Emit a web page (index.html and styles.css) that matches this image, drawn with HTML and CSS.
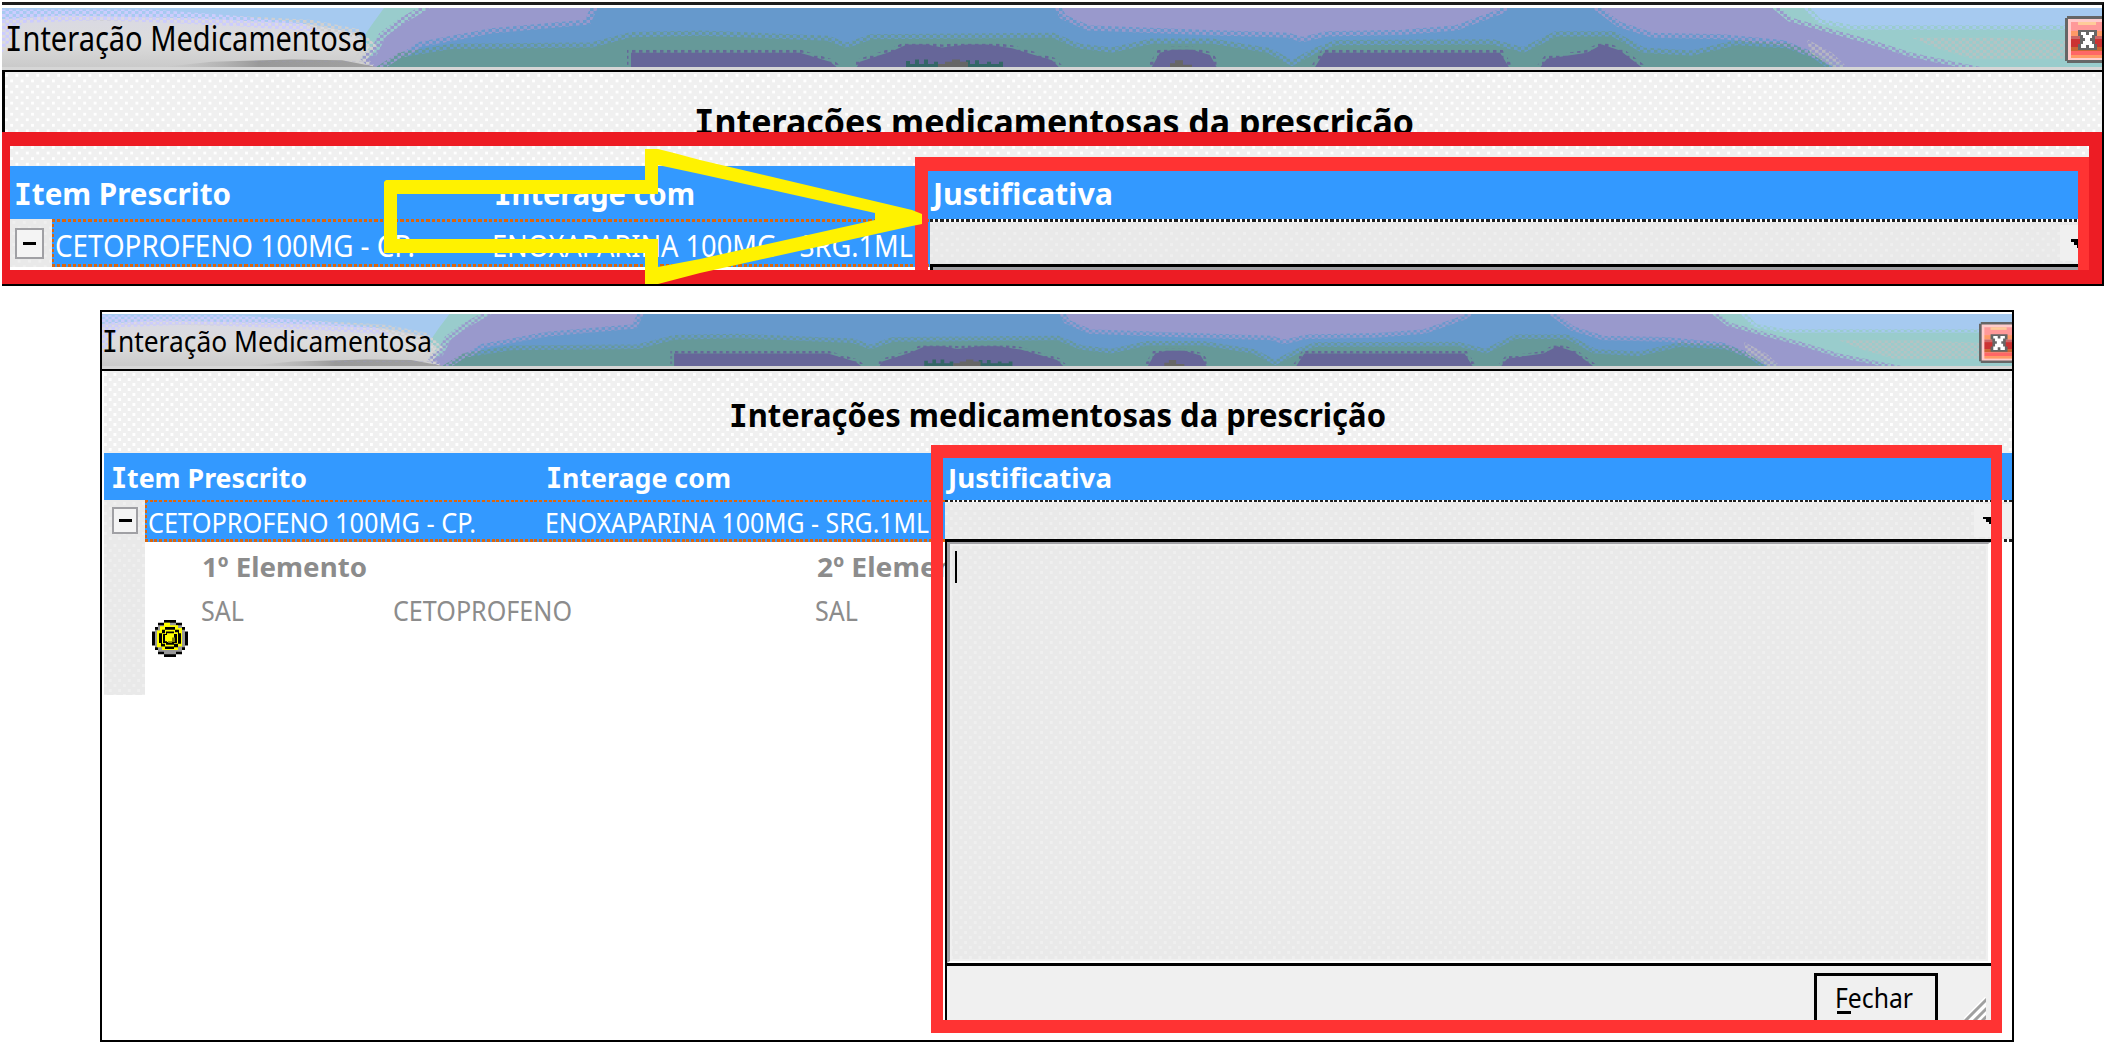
FILE: index.html
```html
<!DOCTYPE html>
<html lang="pt-BR">
<head>
<meta charset="utf-8">
<title>Interação Medicamentosa</title>
<link rel="stylesheet" href="styles.css">
</head>
<body>
<svg class="defs" width="0" height="0" aria-hidden="true">
  <defs>
    <pattern id="d-blue" width="7" height="8" patternUnits="userSpaceOnUse"><path fill="#6699cc" d="M0 0h3.5v4H0zM3.5 4H7v4H3.5z"/></pattern>
    <pattern id="d-teal" width="7" height="8" patternUnits="userSpaceOnUse"><path fill="#669999" d="M0 0h3.5v4H0zM3.5 4H7v4H3.5z"/></pattern>
    <pattern id="d-dark" width="7" height="8" patternUnits="userSpaceOnUse"><path fill="#666699" d="M0 0h3.5v4H0z"/></pattern>
    <pattern id="d-purple" width="7" height="8" patternUnits="userSpaceOnUse"><path fill="#9999cc" d="M0 0h3.5v4H0z"/></pattern>
    <pattern id="d-aqua" width="7" height="8" patternUnits="userSpaceOnUse"><path fill="#99cccc" d="M0 0h3.5v4H0zM3.5 4H7v4H3.5z"/></pattern>
    <pattern id="d-beige" width="7" height="8" patternUnits="userSpaceOnUse"><path fill="#c0c0c0" d="M0 0h3.5v4H0zM3.5 4H7v4H3.5z"/></pattern>
    <pattern id="d-lav" width="7" height="8" patternUnits="userSpaceOnUse"><path fill="#ccccff" d="M0 0h3.5v4H0zM3.5 4H7v4H3.5z"/></pattern>
    <pattern id="d-gray" width="7" height="8" patternUnits="userSpaceOnUse"><path fill="#d0d0d0" d="M0 0h3.5v4H0zM3.5 4H7v4H3.5z"/></pattern>
    <linearGradient id="glass" x2="0" y2="1"><stop offset="0" stop-color="#d9d9e4"/><stop offset=".45" stop-color="#dcdcdc"/><stop offset="1" stop-color="#c4c4c4"/></linearGradient>
    <linearGradient id="shade" x2="1" y2="0"><stop offset="0" stop-color="#b8b8b8" stop-opacity="0"/><stop offset=".45" stop-color="#999"/><stop offset="1" stop-color="#a0a0a0"/></linearGradient>
    <symbol id="aero" viewBox="0 0 2100 79" preserveAspectRatio="none">
      <rect width="2100" height="79" fill="#9999cc"/>
      <path stroke="url(#d-blue)" stroke-width="14" fill="#6699cc" d="M600 -12L588 22L490 34L420 52L376 90H1850L1810 66L1780 50L1720 42L1650 40L1615 25L1590 0V-12H1520L1500 8L1455 30L1400 36L1325 38L1300 46L1285 40L1200 36L1085 30L1058 14L1048 -12Z"/>
      <path stroke="url(#d-teal)" stroke-width="14" fill="#669999" d="M372 90L400 66L450 55L590 53L630 39L700 37L825 44L845 54L870 42L1050 40L1075 54L1110 60L1150 48L1210 48L1265 60L1290 78L1315 60L1335 50L1490 49L1522 60L1555 38L1610 38L1640 60L1690 64L1735 50L1785 54L1812 68L1835 90Z"/>
      <path stroke="url(#d-dark)" stroke-width="8" fill="#666699" d="M629 90V60H798L828 72L845 90ZM850 90L858 72L890 58L905 49L925 49L940 53L965 49L985 49L1010 54L1050 70L1065 90ZM1145 90L1158 60L1170 56H1190L1208 63L1219 90ZM1308 90L1322 60H1498L1512 90ZM1532 90L1545 68L1585 60L1600 49L1618 57L1650 90Z"/>
      <path fill="#336666" d="M904 79v-8h4v4h5v-6h4v6h5v-6h4v6h6v-3h4v7zM964 79v-9h4v5h5v-5h4v5h8v-3h4v3h8v-3h4v7z"/>
      <path fill="#666666" d="M936 79v-4h7v-3h7v-3h8v3h8v7zM1168 79v-5h5v-4h8v6h9v3z"/>
      <path stroke="url(#d-aqua)" stroke-width="12" fill="#99cccc" d="M1769 -10L1790 13L1835 30L1870 43L1910 60L1960 74L2020 90H2120V-10Z"/>
      <path stroke="url(#d-aqua)" stroke-width="12" fill="#a6caf0" d="M1795 -10L1815 20L1850 29H2120V-10Z"/>
      <path fill="url(#d-beige)" opacity=".75" d="M1910 40H2000L2100 46V68H1970L1935 54ZM1805 42L1830 60L1845 79H1830L1808 60Z"/>
      <path stroke="url(#d-aqua)" stroke-width="16" fill="#99cccc" d="M-10 -10H428L395 16L377 34L368 58L300 79H-10Z"/>
      <path fill="#a6caf0" d="M0 0H382L370 22L360 42H0Z"/>
      <path stroke="url(#d-gray)" stroke-width="12" fill="url(#glass)" d="M-10 16L60 10L200 14L310 22L355 34L368 52L358 68L375 90H-10Z"/>
      <path fill="url(#d-lav)" d="M0 2H150L230 10L300 20L320 32L230 24L100 16L20 20L0 60Z"/>
      <path fill="url(#shade)" d="M160 79L210 72L290 69L340 70L375 79Z"/>
      <path fill="url(#d-purple)" d="M250 69H370V60H380V72H250Z"/>
    </symbol>
    <symbol id="close" viewBox="0 0 37 47" preserveAspectRatio="none">
      <path fill="#666" d="M2 0H37V47H2V45H0V2H2Z"/>
      <path fill="#ffcccc" d="M3 3H37V44H3Z"/>
      <path fill="#ff9999" d="M6 6H37V15H6Z"/><path fill="#ffcc99" d="M13 6H31V9H13Z"/>
      <path fill="#ff9966" d="M6 15H37V20H6Z"/>
      <path fill="#cc6666" d="M6 20H37V23H6Z"/>
      <path fill="#cc3333" d="M6 23H37V31H6Z"/><path fill="#cc6633" d="M6 31H37V35H6Z"/>
      <path fill="#ff6666" d="M6 35H37V39H6Z"/><path fill="#ff9966" d="M6 39H37V42H6Z"/>
      <path fill="#666" d="M13 14H32V20H30V28H32V34H13V28H15V20H13Z"/>
      <path fill="#fff" d="M16 16H21V19H24V16H29V19H27V22H25V25H27V28H29V32H24V29H21V32H16V28H18V25H20V22H18V19H16Z"/>
    </symbol>
  </defs>
</svg>

<section class="window window--top">
  <header class="titlebar">
    <svg class="titlebar__glass"><use href="#aero" width="100%" height="100%"/></svg>
    <svg class="label label--dark" width="361" height="59"><text x="-2" y="42.5" font-size="34" textLength="363" lengthAdjust="spacingAndGlyphs"><tspan class="i">I</tspan>nteração Medicamentosa</text></svg>
    <svg class="titlebar__close"><use href="#close" width="100%" height="100%"/></svg>
  </header>
  <div class="heading dots">
    <svg class="label label--dark label--bold" width="718" height="94"><text x="-2" y="63" font-size="36" textLength="720" lengthAdjust="spacingAndGlyphs"><tspan class="i">I</tspan>nterações medicamentosas da prescrição</text></svg>
  </div>
  <div class="grid-head">
    <svg class="label label--bold" width="216" height="53"><text x="-1" y="39" font-size="31" textLength="217" lengthAdjust="spacingAndGlyphs"><tspan class="i">I</tspan>tem Prescrito</text></svg>
    <svg class="label label--bold" width="200" height="53"><text x="-1" y="39" font-size="31" textLength="201" lengthAdjust="spacingAndGlyphs"><tspan class="i">I</tspan>nterage com</text></svg>
    <svg class="label label--bold" width="180" height="53"><text x="0" y="39" font-size="31" textLength="180" lengthAdjust="spacingAndGlyphs">Justificativa</text></svg>
  </div>
  <div class="grid-row">
    <div class="tree dots dots--gray"><span class="toggle"></span></div>
    <div class="selected">
      <svg class="label" width="358" height="48"><text x="-2" y="37.5" font-size="31" textLength="360" lengthAdjust="spacingAndGlyphs">CETOPROFENO 100MG - CP.</text></svg>
      <svg class="label" width="419" height="48"><text x="-2" y="37.5" font-size="31" textLength="421" lengthAdjust="spacingAndGlyphs">ENOXAPARINA 100MG - SRG.1ML</text></svg>
    </div>
    <div class="combo dots dots--gray"><span class="combo__button"><svg width="17" height="9"><path d="M0 0H17V3H14V6H11V9H6V6H3V3H0Z"/></svg></span></div>
  </div>
  <div class="memo-edge"></div>
  <span class="mark mark--field"></span>
  <span class="mark mark--row"></span>
  <svg class="arrow" width="540" height="136"><path fill="#fff200" fill-rule="evenodd" d="M2 31H261V0H274L290 4L316 11L528 61L538 65V75L528 77L316 124L274 135H261V104H0V33ZM13 45V90H274V118L316 110L491 71V64L316 25L274 16V45Z"/></svg>
</section>

<section class="window window--main">
  <header class="titlebar">
    <svg class="titlebar__glass"><use href="#aero" width="100%" height="100%"/></svg>
    <svg class="label label--dark" width="328" height="52"><text x="-2" y="38" font-size="29.5" textLength="330" lengthAdjust="spacingAndGlyphs"><tspan class="i">I</tspan>nteração Medicamentosa</text></svg>
    <svg class="titlebar__close"><use href="#close" width="100%" height="100%"/></svg>
  </header>
  <div class="heading dots">
    <svg class="label label--dark label--bold" width="655" height="82"><text x="-2" y="55.5" font-size="32" textLength="657" lengthAdjust="spacingAndGlyphs"><tspan class="i">I</tspan>nterações medicamentosas da prescrição</text></svg>
  </div>
  <div class="grid-head">
    <svg class="label label--bold" width="195" height="47"><text x="-1" y="34.5" font-size="27.5" textLength="196" lengthAdjust="spacingAndGlyphs"><tspan class="i">I</tspan>tem Prescrito</text></svg>
    <svg class="label label--bold" width="184" height="47"><text x="-1" y="34.5" font-size="27.5" textLength="185" lengthAdjust="spacingAndGlyphs"><tspan class="i">I</tspan>nterage com</text></svg>
    <svg class="label label--bold" width="164" height="47"><text x="0" y="34.5" font-size="27.5" textLength="164" lengthAdjust="spacingAndGlyphs">Justificativa</text></svg>
  </div>
  <div class="grid-row">
    <div class="tree dots dots--gray"><span class="toggle"></span></div>
    <div class="selected">
      <svg class="label" width="326" height="42"><text x="-2" y="32.5" font-size="27" textLength="328" lengthAdjust="spacingAndGlyphs">CETOPROFENO 100MG - CP.</text></svg>
      <svg class="label" width="382" height="42"><text x="-2" y="32.5" font-size="27" textLength="384" lengthAdjust="spacingAndGlyphs">ENOXAPARINA 100MG - SRG.1ML</text></svg>
    </div>
    <div class="combo dots dots--gray"><span class="combo__button"><svg width="16" height="7"><path d="M0 0H16V2H13V5H10V7H6V5H3V2H0Z"/></svg></span></div>
  </div>
  <div class="content">
    <div class="tree dots dots--gray"></div>
    <div class="details">
      <div class="details__head">
        <svg class="label label--gray label--bold" width="164" height="35"><text x="-1" y="34.5" font-size="27.5" textLength="165" lengthAdjust="spacingAndGlyphs">1º Elemento</text></svg>
        <svg class="label label--gray label--bold" width="168" height="35"><text x="0" y="34.5" font-size="27.5" textLength="168" lengthAdjust="spacingAndGlyphs">2º Elemento</text></svg>
      </div>
      <div class="details__row">
        <svg class="label label--gray" width="43" height="43"><text x="0" y="44" font-size="27" textLength="43" lengthAdjust="spacingAndGlyphs">SAL</text></svg>
        <svg class="label label--gray" width="178" height="43"><text x="-1" y="44" font-size="27" textLength="179" lengthAdjust="spacingAndGlyphs">CETOPROFENO</text></svg>
        <svg class="label label--gray" width="43" height="43"><text x="0" y="44" font-size="27" textLength="43" lengthAdjust="spacingAndGlyphs">SAL</text></svg>
      </div>
      <svg class="severity" width="36" height="37" viewBox="0 0 36 42" preserveAspectRatio="none">
        <path fill="#000" d="M12 0H24V3H30V8H33V13H36V29H33V34H30V39H24V42H12V39H6V34H3V29H0V13H3V8H6V3H12Z"/>
        <path fill="#999" d="M12 3H24V6H30V11H33V31H30V36H24V39H12V36H6V31H3V11H6V6H12Z"/>
        <path fill="#ff0" d="M12 3H18V6H26V9H30V30H26V34H10V31H5V12H8V7H12Z"/>
        <path fill="#000" d="M13 8H23V11H27V15H29V27H26V31H22V33H13V30H9V26H7V15H10V11H13Z"/>
        <path fill="#ff0" d="M13 11H23V14H26V27H22V30H13V27H10V15H13Z"/>
        <path fill="#000" d="M14 13H22V16H25V26H22V28H14V26H11V16H14Z"/>
        <path fill="#ff0" d="M15 15H22V25H15V24H13V17H15Z"/><path fill="#808000" d="M20 20H23V25H20V26H16V24H20Z"/>
      </svg>
    </div>
    <div class="popup">
      <div class="memo dots dots--gray"><span class="caret"></span></div>
      <div class="popup__footer">
        <div class="button"><svg class="label label--dark" width="77" height="44"><text x="-2" y="34" font-size="27.5" textLength="78" lengthAdjust="spacingAndGlyphs">Fechar</text><path d="M0 37H14V40H0Z"/></svg></div>
        <svg class="grip" width="22" height="23"><path d="M1 24L23 2M7 26L26 7M13 27L28 12" fill="none" stroke="#fff" stroke-width="6"/><path d="M1 24L23 2M9 25L26 8M17 25L28 14" fill="none" stroke="#a0a0a0" stroke-width="3"/></svg>
      </div>
    </div>
  </div>
  <span class="mark mark--field"></span>
</section>
</body>
</html>
```
FILE: styles.css
```css
* { box-sizing: border-box; }

body {
  margin: 0;
  width: 2104px;
  height: 1042px;
  overflow: hidden;
  background: #fff;
  font-family: "Noto Sans", "DejaVu Sans", sans-serif;
  display: flex;
  flex-direction: column;
}

svg { display: block; }
.defs { position: absolute; }

.window { position: relative; flex: none; border: 2px solid #000; }
.window--top {
  --tile-w: 10.45px; --tile-h: 11.1px; --dot-w: 3.2px; --dot-h: 3px;
  --dash: 5.2px; --line: 3px;
  width: 2102px;
  height: 284px;
  margin: 2px 0 0 2px;
  border-left: 0;
  border-top: 3px solid #1c1c1c;
}
.window--main {
  --tile-w: 9.5px; --tile-h: 10px; --dot-w: 3px; --dot-h: 2.7px;
  --dash: 4.75px; --line: 2px;
  width: 1914px;
  height: 732px;
  margin: 24px 0 0 100px;
}

/* Stippled panel surface */
.dots {
  --dot: #fff;
  background-color: #f0f0f0;
  background-image:
    conic-gradient(at var(--dot-w) var(--dot-h), transparent 75%, var(--dot) 0),
    conic-gradient(at var(--dot-w) var(--dot-h), transparent 75%, var(--dot) 0);
  background-size: var(--tile-w) var(--tile-h);
  background-position: 0 2px, calc(var(--tile-w) / 2) calc(var(--tile-h) / 2 + 2px);
}
.dots--gray { --dot: #efefef; background-color: #e9e9e9; }

/* Labels */
.label { flex: none; fill: #fff; overflow: visible; }
.label text { white-space: pre; }
.label--dark { fill: #000; }
.label--gray { fill: #8c8c8c; }
.label--bold { font-weight: 700; }
/* Capital I with serifs */
.i { font-family: "DejaVu Sans Mono", monospace; }

/* Title bar */
.titlebar { display: flex; position: relative; border-bottom: 2px solid #000; }
.titlebar > .label { position: relative; }
.titlebar__glass { position: absolute; left: 0; top: 0; width: 100%; }
.titlebar__close { margin-left: auto; position: relative; }
.window--top .titlebar { height: 67px; padding: 3px 0 0 5px; background: linear-gradient(#fff 3px, #d6d6d6 3px); }
.window--top .titlebar__glass { height: 59px; top: 3px; }
.window--top .titlebar__close { width: 37px; height: 47px; margin-top: 8px; }
.window--main .titlebar { height: 59px; padding: 2px 0 0 2px; background: linear-gradient(#fff 2px, #d6d6d6 2px); }
.window--main .titlebar__glass { height: 52px; top: 2px; }
.window--main .titlebar__close { width: 33px; height: 41px; margin-top: 8px; }

/* Heading */
.heading { display: flex; }
.window--top .heading { height: 94px; padding-left: 691px; border-left: 3px solid #000; }
.window--main .heading { height: 82px; padding-left: 627px; margin-left: 2px; }

/* Grid */
.grid-head { display: grid; background: #3399ff; }
.window--top .grid-head { height: 53px; grid-template-columns: 480px 438px 1fr; padding-left: 13px; }
.window--main .grid-head { height: 47px; grid-template-columns: 435px 401px 1fr; padding-left: 8px; margin-left: 2px; }

.grid-row { display: grid; }
.window--top .grid-row { height: 48px; grid-template-columns: 50px 878px 1fr; }
.window--main .grid-row { height: 42px; grid-template-columns: 41px 800px 1fr; margin-left: 2px; }

.toggle {
  display: flex;
  align-items: center;
  justify-content: center;
  border: 2px solid #a0a0a4;
  background: #f4f4f4;
}
.toggle::before { content: ""; width: 13px; height: 3px; background: #000; }
.window--top .toggle { width: 29px; height: 31px; margin: 9px 0 0 13px; }
.window--main .toggle { width: 26px; height: 27px; margin: 7px 0 0 8px; }

.selected {
  --dashes: repeating-linear-gradient(90deg, #d9660f 0 calc(var(--dash) * .6), transparent 0 var(--dash));
  display: grid;
  background:
    var(--dashes) 0 0 / 100% var(--line) no-repeat,
    var(--dashes) 0 100% / 100% 3px no-repeat,
    repeating-linear-gradient(#d9660f 0 3px, transparent 0 5px) 0 0 / 2px 100% no-repeat,
    #3399ff;
}
.window--top .selected { grid-template-columns: 437px 1fr; padding-left: 5px; }
.window--main .selected { grid-template-columns: 397px 1fr; padding-left: 5px; }

.combo { display: flex; position: relative; padding-top: var(--line); }
.combo::before,
.window--main .combo::after {
  content: "";
  position: absolute;
  inset: 0 0 auto;
  height: var(--line);
  background: repeating-linear-gradient(90deg, #202020 0 calc(var(--dash) * .6), #fff 0 var(--dash));
}
.window--main .combo::after { inset: auto 0 0; height: 3px; }
.combo__button { margin-left: auto; background: #f0f0f0; }
.window--top .combo__button { width: 42px; height: 36px; margin-top: 3px; padding: 14px 0 0 11px; }
.window--main .combo__button { width: 38px; height: 33px; margin-top: 2px; padding: 13px 0 0 9px; }

.window--top .combo { border-bottom: 3px solid #000; }
.memo-edge { height: 3px; margin-left: 928px; background: #a0a0a4; border-left: 3px solid #000; }

/* Expanded content */
.content { display: grid; grid-template-columns: 41px 800px 1046px 1fr; margin-left: 2px; height: 498px; }
.content .tree { height: 153px; }
.details { display: grid; grid-template-rows: 35px 43px auto; align-content: start; overflow: hidden; }
.details__head { display: grid; grid-template-columns: 614px 1fr; padding-left: 58px; }
.details__row { display: grid; grid-template-columns: 193px 421px 1fr; padding-left: 56px; }
.severity { margin-left: 7px; }

/* Justification editor */
.popup { display: flex; flex-direction: column; align-self: start; position: relative; margin-top: -3px; border-top: 3px solid #000; border-left: 2px solid #000; }
.memo {
  height: 421px;
  padding: 7px 0 0 5px;
  border: solid #fff;
  border-width: 2px 3px 2px 3px;
  border-top-color: #a0a0a4;
  border-left-color: #a0a0a4;
  box-shadow: inset 0 0 0 2px #f0f0f0;
  background-clip: padding-box;
}
.caret { display: block; width: 2px; height: 32px; background: #000; }
.popup__footer { display: flex; height: 57px; border-top: 3px solid #000; background: #f0f0f0; }
.button { width: 124px; height: 48px; margin: 7px 26px 0 867px; padding-left: 20px; border: 3px solid #000; border-bottom: 0; }
.button .label { margin-top: -2px; }
.grip { margin-top: 31px; overflow: hidden; }

/* Highlight frames and pointer drawn over the windows */
.mark { position: absolute; border-style: solid; }
.mark--field { border-color: #ff3333; }
.window--top .mark--field { left: 913px; top: 152px; width: 1174px; height: 118px; border-width: 14px 11px 0 13px; }
.mark--row { border-color: #ed1c24; left: 0; top: 127px; width: 2100px; height: 152px; border-width: 14px 13px 14px 8px; }
.window--main .mark--field { left: 829px; top: 133px; width: 1071px; height: 588px; border-width: 13px 11px 13px 12px; }
.arrow { position: absolute; left: 382px; top: 144px; }
```
